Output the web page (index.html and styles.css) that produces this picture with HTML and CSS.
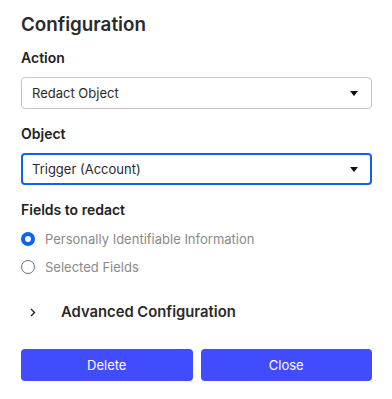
FILE: index.html
```html
<!DOCTYPE html>
<html>
<head>
<meta charset="utf-8">
<link rel="stylesheet" href="styles.css">
</head>
<body>
<div class="panel">
  <h1 class="title">Configuration</h1>

  <div class="label label-first">Action</div>
  <div class="select">
    <span>Redact Object</span>
    <svg class="caret" width="8" height="5" viewBox="0 0 8 5"><path d="M0 0H8L4 5Z" fill="#111"/></svg>
  </div>

  <div class="label">Object</div>
  <div class="select select-focus">
    <span>Trigger (Account)</span>
    <svg class="caret" width="8" height="5" viewBox="0 0 8 5"><path d="M0 0H8L4 5Z" fill="#111"/></svg>
  </div>

  <div class="label">Fields to redact</div>
  <div class="radios">
    <div class="radio-row"><span class="radio radio-on"></span><span class="radio-text">Personally Identifiable Information</span></div>
    <div class="radio-row"><span class="radio"></span><span class="radio-text">Selected Fields</span></div>
  </div>

  <div class="advanced">
    <svg class="chev" width="6" height="9" viewBox="0 0 6 9"><path d="M1 1L4.5 4.5L1 8" fill="none" stroke="#222" stroke-width="1.4"/></svg>
    <span>Advanced Configuration</span>
  </div>

  <div class="buttons">
    <button class="btn">Delete</button>
    <button class="btn">Close</button>
  </div>
</div>
</body>
</html>
```
FILE: styles.css
```css
* { box-sizing: border-box; }
body {
  margin: 0;
  background: #fff;
  font-family: Inter, "Noto Sans", sans-serif;
  color: #222;
}
.panel {
  padding: 13px 20px 0 21px;
}
.title {
  margin: 0;
  font-size: 18.8px;
  line-height: 24px;
  font-weight: 600;
  color: #2a2a2a;
}
.label {
  margin-top: 16px;
  font-size: 14px;
  line-height: 18px;
  font-weight: 600;
  color: #222;
}
.label-first { margin-top: 12px; }
.select {
  margin-top: 10px;
  height: 32px;
  border: 1px solid #c4c4c4;
  border-radius: 4px;
  display: flex;
  align-items: center;
  justify-content: space-between;
  padding: 0 13px 0 10px;
  font-size: 13px;
  color: #2a2a2a;
}
.select-focus {
  border: 2px solid #0b63ee;
  padding: 0 12px 0 9px;
}
.radios {
  margin-top: 6px;
}
.radio-row {
  height: 28px;
  display: flex;
  align-items: center;
  gap: 10px;
}
.radio {
  width: 14px;
  height: 14px;
  border-radius: 50%;
  border: 1.3px solid #6f6f6f;
  background: #fff;
}
.radio-on {
  border: 4.5px solid #0b63ee;
}
.radio-text {
  font-size: 13px;
  color: #8a8a8a;
}
.advanced {
  margin-top: 21px;
  height: 20px;
  display: flex;
  align-items: center;
  padding-left: 9px;
  font-size: 14.8px;
  font-weight: 600;
  color: #2a2a2a;
}
.chev { margin-right: 25px; }
.buttons {
  margin-top: 27px;
  display: grid;
  grid-template-columns: 1fr 1fr;
  gap: 8px;
}
.btn {
  height: 32px;
  border: none;
  border-radius: 4px;
  background: #424cff;
  color: #fff;
  font-family: Inter, "Noto Sans", sans-serif;
  font-size: 13px;
}
```
